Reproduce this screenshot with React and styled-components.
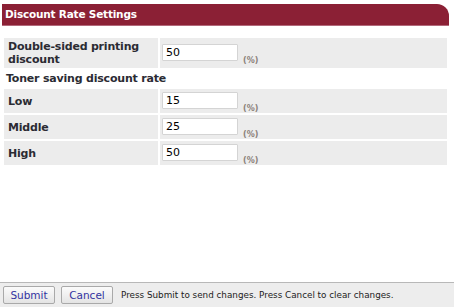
import styled, { createGlobalStyle } from "styled-components";

const GlobalStyle = createGlobalStyle`
	html, body {
		margin: 0;
		padding: 0;
		height: 100%;
		background: #fff;
	}
	#root {
		height: 100%;
	}
`;

const rows = [
	{ label: "Double-sided printing discount", value: "50", tall: true },
	{ heading: "Toner saving discount rate" },
	{ label: "Low", value: "15" },
	{ label: "Middle", value: "25" },
	{ label: "High", value: "50" },
];

export default function App() {
	return (
		<>
			<GlobalStyle />
			<Page>
				<Main>
					<Title>Discount Rate Settings</Title>
					<Table>
						<tbody>
							{rows.map((row, i) =>
								row.heading ? (
									<tr key={i}>
										<Heading colSpan={2}>{row.heading}</Heading>
									</tr>
								) : (
									<tr key={i}>
										<Label $tall={row.tall}>{row.label}</Label>
										<Value>
											<Input defaultValue={row.value} />
											<Unit>(%)</Unit>
										</Value>
									</tr>
								)
							)}
						</tbody>
					</Table>
				</Main>
				<Footer>
					<Button>Submit</Button>
					<Button>Cancel</Button>
					<Hint>Press Submit to send changes. Press Cancel to clear changes.</Hint>
				</Footer>
			</Page>
		</>
	);
}

const Page = styled.div`
	height: 100%;
	display: flex;
	flex-direction: column;
	font-family: "DejaVu Sans", Verdana, sans-serif;
`;

const Main = styled.div`
	flex: 1;
	padding: 4px 5px 0 2px;
`;

const Title = styled.div`
	height: 21px;
	background: #8b2035;
	border-top-right-radius: 12px;
	border-bottom: 1px solid #b2687a;
	color: #fff;
	font-weight: bold;
	font-size: 10.5px;
	line-height: 21px;
	padding-left: 3px;
	letter-spacing: -0.2px;
`;

const Table = styled.table`
	width: 447px;
	margin: 10px 0 0 0;
	border-spacing: 2px;
	border-collapse: separate;
`;

const Label = styled.td`
	width: 146px;
	background: #ececec;
	color: #2b2b33;
	font-weight: bold;
	font-size: 11px;
	line-height: 13px;
	padding: ${(p) => (p.$tall ? "2px 4px" : "5px 4px")};
	height: ${(p) => (p.$tall ? "26px" : "14px")};
	box-sizing: content-box;
	vertical-align: middle;
	letter-spacing: -0.2px;
`;

const Heading = styled.td`
	color: #2b2b33;
	font-weight: bold;
	font-size: 11px;
	height: 17px;
	padding: 0 2px;
	letter-spacing: -0.2px;
`;

const Value = styled.td`
	background: #ececec;
	padding: 0 0 0 2px;
	vertical-align: middle;
	white-space: nowrap;
`;

const Input = styled.input`
	width: 68px;
	height: 13px;
	padding: 1px 3px;
	border: 1px solid #d4d4d4;
	border-radius: 1px;
	font-family: "DejaVu Sans", Verdana, sans-serif;
	font-size: 11px;
	color: #000;
	vertical-align: middle;
	outline: none;
`;

const Unit = styled.span`
	display: inline-block;
	margin-left: 5px;
	font-size: 8px;
	font-weight: bold;
	color: #8a8078;
	vertical-align: -6px;
`;

const Footer = styled.div`
	height: 24px;
	background: #ededed;
	border-top: 1px solid #b8b8b8;
	display: flex;
	align-items: center;
	padding: 0 3px;
	gap: 6px;
`;

const Button = styled.button`
	height: 18px;
	padding: 0 6px;
	min-width: 52px;
	background: linear-gradient(#fbfbfb, #e4e4e4);
	border: 1px solid #a9a9a9;
	border-radius: 2px;
	color: #3333a0;
	font-family: "DejaVu Sans", Verdana, sans-serif;
	font-size: 10.5px;
	line-height: 16px;
`;

const Hint = styled.span`
	margin-left: 2px;
	font-size: 8.8px;
	color: #222;
`;
